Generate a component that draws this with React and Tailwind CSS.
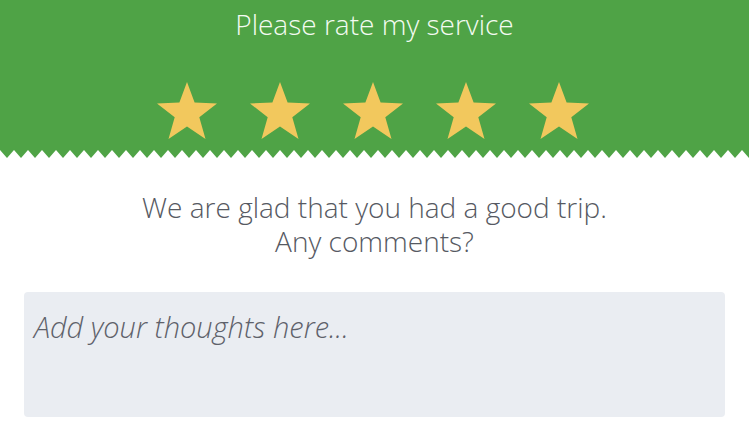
import React from "react";

function Star() {
  return (
    <svg width="62" height="58" viewBox="0 0 62 58">
      <polygon
        points="31,0 38.6,20.5 61,21.5 43.3,35.2 49.5,57 31,44.5 12.5,57 18.7,35.2 1,21.5 23.4,20.5"
        fill="#f2c85d"
      />
    </svg>
  );
}

function Zigzag() {
  const n = Math.ceil(749 / 14) + 1;
  let d = "M0,0 ";
  for (let i = 0; i < n; i++) {
    d += `L${i * 14 + 7},8 L${i * 14 + 14},0 `;
  }
  d += `L${n * 14},0 Z`;
  return (
    <svg width="749" height="8" viewBox="0 0 749 8" className="block">
      <path d={d} fill="#4fa346" />
    </svg>
  );
}

export default function App() {
  return (
    <div className="w-[749px] h-[436px] bg-white overflow-hidden" style={{ fontFamily: "'Open Sans', sans-serif" }}>
      <div className="bg-[#4fa346] h-[150px] flex flex-col items-center">
        <div className="text-[28px] text-[#f4fbf2] font-light mt-[5px] leading-[38px]">
          Please rate my service
        </div>
        <div className="flex gap-[31px] mt-[39px] -ml-[4px]">
          <Star />
          <Star />
          <Star />
          <Star />
          <Star />
        </div>
      </div>
      <Zigzag />
      <div className="flex flex-col items-center text-[28px] leading-[34px] text-[#565962] font-light mt-[32px]">
        <span className="inline-block h-[34px]">We are glad that you had a good trip.</span>
        <span className="inline-block h-[34px]">Any comments?</span>
      </div>
      <div className="mx-[24px] mt-[34px] h-[125px] bg-[#eaedf2] rounded-[4px] px-[10px] pt-[17px] text-[29px] italic font-light text-[#5e616a] leading-[36px]">
        Add your thoughts here...
      </div>
    </div>
  );
}
